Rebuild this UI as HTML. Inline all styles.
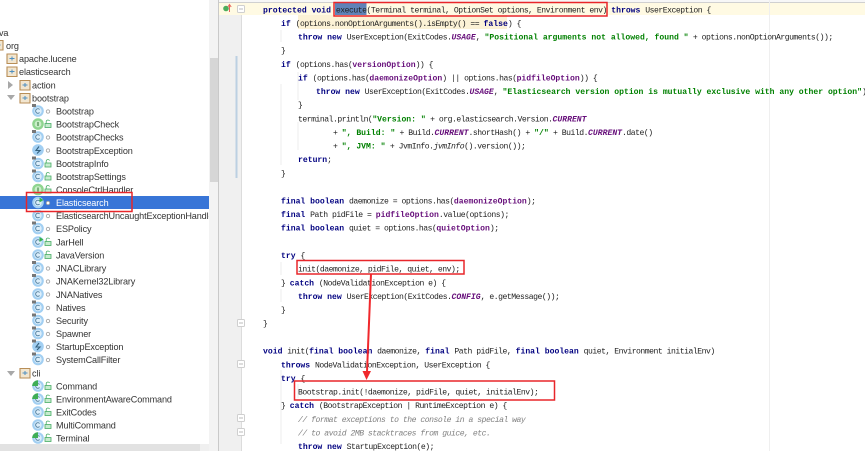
<!DOCTYPE html>
<html><head><meta charset="utf-8">
<style>
html,body{margin:0;padding:0;background:#fff;width:865px;height:451px;overflow:hidden}
svg{display:block}
.c{font:8.11px "Liberation Mono",monospace;fill:#222;white-space:pre;letter-spacing:-.486px}
.k{font-weight:bold;fill:#000080;letter-spacing:0}
.s{font-weight:bold;fill:#008000;letter-spacing:0}
.f{font-weight:bold;fill:#660e7a;letter-spacing:0}
.i{font-weight:bold;font-style:italic;fill:#660e7a;letter-spacing:0}
.m{font-style:italic;fill:#808080}
.t{font:9.1px "Liberation Sans",sans-serif;fill:#333;letter-spacing:-.12px}
.b{filter:blur(.35px)}
</style></head><body>
<svg width="865" height="451" viewBox="0 0 865 451" xmlns="http://www.w3.org/2000/svg">
<defs>
<clipPath id="tc"><rect x="0" y="0" width="209" height="444"/></clipPath>
<g id="cl"><circle r="5.8" fill="#a2cff2"/><circle r="3.7" fill="#dceefa"/><path d="M1.6-1.6A2.3 2.3 0 1 0 1.6 1.6" fill="none" stroke="#4a7a9c" stroke-width=".9"/></g>
<g id="pin"><path d="M-6-7h4v3h-4z" fill="#777"/></g>
<g id="dot"><circle r="1.7" fill="#fff" stroke="#a5a5a5" stroke-width=".9"/></g>
<g id="lock"><rect x="-3" y="-1" width="6" height="4" fill="#c6ebce" stroke="#48ad66" stroke-width=".8"/><path d="M-1.8-1V-3a1.8 1.8 0 0 1 3.4-.5" fill="none" stroke="#48ad66" stroke-width=".8"/></g>
<g id="fo"><path d="M0 .5h10v9.5H0z" fill="#f2e6d0" stroke="#b88e57" stroke-width="1.1"/><path d="M2.5 5h5" stroke="#4f8fc0" stroke-width="1"/><path d="M5 3v4" stroke="#4f8fc0" stroke-width="1"/></g>
<g id="int"><circle r="5.8" fill="#8fd58f"/><circle r="3.4" fill="#c9eec9"/><path d="M0-2V2" stroke="#3c7d3c" stroke-width="1.1"/></g>
<g id="ex"><circle r="5.8" fill="#a2cff2"/><path d="M1-3.500L-2 .5H2L-1 3.500" fill="none" stroke="#35627f" stroke-width="1.1"/></g>
<g id="gr"><path d="M0-5.800A5.800 5.800 0 0 0-5.800 0H0Z" fill="#3fae55"/></g>
<g id="fd"><rect x="-3.500" y="-3.500" width="7" height="7" rx="1" fill="#fff" stroke="#cfcfcf"/><path d="M-2 0H2" stroke="#bbb"/></g>
</defs>

<!-- sidebar chrome -->
<rect x="0" y="196" width="209" height="13" fill="#3875d7"/>
<rect x="209" y="0" width="10" height="451" fill="#f3f3f3"/>
<rect x="210" y="58" width="8" height="124" fill="#d6d6d6"/>
<rect x="0" y="444" width="209" height="7" fill="#f0f0f0"/>
<rect x="0" y="444" width="200" height="7" fill="#e2e2e2"/>

<!-- gutter and editor -->
<rect x="218" y="0" width="1" height="451" fill="#c9c9c9"/>
<rect x="219" y="0" width="22" height="451" fill="#f0f0f0"/>
<rect x="241" y="0" width="1" height="451" fill="#dcdcdc"/>
<rect x="219" y="0" width="646" height="2" fill="#f7f7f7"/>
<rect x="219" y="2" width="646" height="1" fill="#d0d0d0"/>
<rect x="219" y="3" width="646" height="12" fill="#fffae3"/>
<rect x="298" y="15" width="209" height="14" fill="#fcf2d6"/>
<rect x="335" y="3" width="31.500" height="12" fill="#5f82b8"/>
<rect x="769" y="0" width="1" height="451" fill="#efefef"/>
<rect x="235.500" y="56" width="2" height="122" fill="#bcd0e2"/>
<path d="M281 30V42M281 84V165M298 72V100M298 122V150M281 262V275M281 289V302M281 370V444M298 384V398" stroke="#ececec" stroke-width="1"/>

<circle cx="226" cy="8.500" r="2.800" fill="#4cae5c"/>
<path d="M229.500 12V5M227.800 7L229.500 4.500 231.200 7" fill="none" stroke="#e8645c" stroke-width="1"/>
<use href="#fd" x="241" y="9"/><use href="#fd" x="241" y="323"/><use href="#fd" x="241" y="364"/><use href="#fd" x="241" y="418"/><use href="#fd" x="241" y="432"/>

<!-- tree -->
<g clip-path="url(#tc)"><g class="b">
<text class="t" x="-1" y="36">va</text>
<use href="#fo" x="-7" y="40"/><text class="t" x="6" y="49">org</text>
<use href="#fo" x="7" y="53.500"/><text class="t" x="19" y="62">apache.lucene</text>
<use href="#fo" x="7" y="66.500"/><text class="t" x="19" y="75">elasticsearch</text>
<path d="M8 81l5 4-5 4z" fill="#a8a8a8"/><use href="#fo" x="20" y="80"/><text class="t" x="32" y="88.500">action</text>
<path d="M7 95l8 0-4 5z" fill="#a8a8a8"/><use href="#fo" x="20" y="93"/><text class="t" x="32" y="101.500">bootstrap</text>
<use href="#cl" x="38" y="111"/><use href="#pin" x="38" y="111"/><use href="#dot" x="48" y="111.500"/><text class="t" x="56" y="114.500">Bootstrap</text>
<use href="#int" x="38" y="124"/><use href="#lock" x="48" y="124.500"/><text class="t" x="56" y="127.500">BootstrapCheck</text>
<use href="#cl" x="38" y="137"/><use href="#pin" x="38" y="137"/><use href="#dot" x="48" y="137.500"/><text class="t" x="56" y="140.500">BootstrapChecks</text>
<use href="#ex" x="38" y="150"/><use href="#dot" x="48" y="150.500"/><text class="t" x="56" y="154">BootstrapException</text>
<use href="#cl" x="38" y="163.500"/><use href="#pin" x="38" y="163.500"/><use href="#lock" x="48" y="164"/><text class="t" x="56" y="167">BootstrapInfo</text>
<use href="#cl" x="38" y="176.500"/><use href="#pin" x="38" y="176.500"/><use href="#lock" x="48" y="177"/><text class="t" x="56" y="180">BootstrapSettings</text>
<use href="#int" x="38" y="189.500"/><use href="#lock" x="48" y="190"/><text class="t" x="56" y="193">ConsoleCtrlHandler</text>
<use href="#cl" x="38" y="202.500"/><path d="M39.500 197.500l4 2.500-4 2.500z" fill="#37b24d"/><use href="#dot" x="48" y="203"/><text class="t" x="56" y="206" style="fill:#fff">Elasticsearch</text>
<use href="#cl" x="38" y="215.500"/><use href="#dot" x="48" y="216"/><text class="t" x="56" y="219">ElasticsearchUncaughtExceptionHandler</text>
<use href="#cl" x="38" y="228.500"/><use href="#pin" x="38" y="228.500"/><use href="#dot" x="48" y="229"/><text class="t" x="56" y="232">ESPolicy</text>
<use href="#cl" x="38" y="242"/><path d="M39.500 237l4 2.500-4 2.500z" fill="#37b24d"/><use href="#lock" x="48" y="242.500"/><text class="t" x="56" y="245.500">JarHell</text>
<use href="#cl" x="38" y="255"/><use href="#lock" x="48" y="255.500"/><text class="t" x="56" y="258.500">JavaVersion</text>
<use href="#cl" x="38" y="268"/><use href="#pin" x="38" y="268"/><use href="#dot" x="48" y="268.500"/><text class="t" x="56" y="271.500">JNACLibrary</text>
<use href="#cl" x="38" y="281"/><use href="#pin" x="38" y="281"/><use href="#dot" x="48" y="281.500"/><text class="t" x="56" y="284.500">JNAKernel32Library</text>
<use href="#cl" x="38" y="294"/><use href="#dot" x="48" y="294.500"/><text class="t" x="56" y="298">JNANatives</text>
<use href="#cl" x="38" y="307.500"/><use href="#pin" x="38" y="307.500"/><use href="#dot" x="48" y="308"/><text class="t" x="56" y="311">Natives</text>
<use href="#cl" x="38" y="320.500"/><use href="#pin" x="38" y="320.500"/><use href="#dot" x="48" y="321"/><text class="t" x="56" y="324">Security</text>
<use href="#cl" x="38" y="333.500"/><use href="#pin" x="38" y="333.500"/><use href="#dot" x="48" y="334"/><text class="t" x="56" y="337">Spawner</text>
<use href="#ex" x="38" y="346.500"/><use href="#pin" x="38" y="346.500"/><use href="#dot" x="48" y="347"/><text class="t" x="56" y="350">StartupException</text>
<use href="#cl" x="38" y="359.500"/><use href="#pin" x="38" y="359.500"/><use href="#dot" x="48" y="360"/><text class="t" x="56" y="363">SystemCallFilter</text>
<path d="M7 371l8 0-4 5z" fill="#a8a8a8"/><use href="#fo" x="20" y="368"/><text class="t" x="32" y="376.500">cli</text>
<use href="#cl" x="38" y="386"/><use href="#gr" x="38" y="386"/><use href="#lock" x="48" y="386.500"/><text class="t" x="56" y="389.500">Command</text>
<use href="#cl" x="38" y="399"/><use href="#gr" x="38" y="399"/><use href="#lock" x="48" y="399.500"/><text class="t" x="56" y="402.500">EnvironmentAwareCommand</text>
<use href="#cl" x="38" y="412"/><use href="#lock" x="48" y="412.500"/><text class="t" x="56" y="415.500">ExitCodes</text>
<use href="#cl" x="38" y="425"/><use href="#lock" x="48" y="425.500"/><text class="t" x="56" y="428.500">MultiCommand</text>
<use href="#cl" x="38" y="438"/><use href="#gr" x="38" y="438"/><use href="#lock" x="48" y="438.500"/><text class="t" x="56" y="441.500">Terminal</text>
</g></g>

<!-- code -->
<g class="b">
<text class="c" x="263" y="12.500"><tspan class="k">protected void </tspan>execute(Terminal terminal, OptionSet options, Environment env) <tspan class="k">throws </tspan>UserException {</text>
<text class="c" x="281" y="26"><tspan class="k">if </tspan>(options.nonOptionArguments().isEmpty() == <tspan class="k">false</tspan>) {</text>
<text class="c" x="298" y="39.500"><tspan class="k">throw new </tspan>UserException(ExitCodes.<tspan class="i">USAGE</tspan>, <tspan class="s">"Positional arguments not allowed, found "</tspan> + options.nonOptionArguments());</text>
<text class="c" x="281" y="53">}</text>
<text class="c" x="281" y="67"><tspan class="k">if </tspan>(options.has(<tspan class="f">versionOption</tspan>)) {</text>
<text class="c" x="298" y="80.500"><tspan class="k">if </tspan>(options.has(<tspan class="f">daemonizeOption</tspan>) || options.has(<tspan class="f">pidfileOption</tspan>)) {</text>
<text class="c" x="316" y="94"><tspan class="k">throw new </tspan>UserException(ExitCodes.<tspan class="i">USAGE</tspan>, <tspan class="s">"Elasticsearch version option is mutually exclusive with any other option"</tspan>);</text>
<text class="c" x="298" y="107.500">}</text>
<text class="c" x="298" y="121.500">terminal.println(<tspan class="s">"Version: "</tspan> + org.elasticsearch.Version.<tspan class="i">CURRENT</tspan></text>
<text class="c" x="333" y="135">+ <tspan class="s">", Build: "</tspan> + Build.<tspan class="i">CURRENT</tspan>.shortHash() + <tspan class="s">"/"</tspan> + Build.<tspan class="i">CURRENT</tspan>.date()</text>
<text class="c" x="333" y="148.500">+ <tspan class="s">", JVM: "</tspan> + JvmInfo.<tspan style="font-style:italic">jvmInfo</tspan>().version());</text>
<text class="c" x="298" y="162"><tspan class="k">return</tspan>;</text>
<text class="c" x="281" y="176">}</text>
<text class="c" x="281" y="203.500"><tspan class="k">final boolean </tspan>daemonize = options.has(<tspan class="f">daemonizeOption</tspan>);</text>
<text class="c" x="281" y="217"><tspan class="k">final </tspan>Path pidFile = <tspan class="f">pidfileOption</tspan>.value(options);</text>
<text class="c" x="281" y="230.500"><tspan class="k">final boolean </tspan>quiet = options.has(<tspan class="f">quietOption</tspan>);</text>
<text class="c" x="281" y="258"><tspan class="k">try </tspan>{</text>
<text class="c" x="298" y="271.500">init(daemonize, pidFile, quiet, env);</text>
<text class="c" x="281" y="285.500">} <tspan class="k">catch </tspan>(NodeValidationException e) {</text>
<text class="c" x="298" y="299"><tspan class="k">throw new </tspan>UserException(ExitCodes.<tspan class="i">CONFIG</tspan>, e.getMessage());</text>
<text class="c" x="281" y="312.500">}</text>
<text class="c" x="263" y="326">}</text>
<text class="c" x="263" y="353.500"><tspan class="k">void </tspan>init(<tspan class="k">final boolean </tspan>daemonize, <tspan class="k">final </tspan>Path pidFile, <tspan class="k">final boolean </tspan>quiet, Environment initialEnv)</text>
<text class="c" x="281" y="367.500"><tspan class="k">throws </tspan>NodeValidationException, UserException {</text>
<text class="c" x="281" y="381"><tspan class="k">try </tspan>{</text>
<text class="c" x="298" y="394.500">Bootstrap.init(!daemonize, pidFile, quiet, initialEnv);</text>
<text class="c" x="281" y="408">} <tspan class="k">catch </tspan>(BootstrapException | RuntimeException e) {</text>
<text class="c m" x="298" y="422">// format exceptions to the console in a special way</text>
<text class="c m" x="298" y="435.500">// to avoid 2MB stacktraces from guice, etc.</text>
<text class="c" x="298" y="449"><tspan class="k">throw new </tspan>StartupException(e);</text>
</g>

<!-- annotations -->
<g fill="none" stroke="#e8262a" stroke-width="1.500">
<rect x="26.500" y="192.500" width="105.500" height="19"/>
<rect x="334" y="2.500" width="273" height="13.500"/>
<rect x="297" y="260.500" width="167" height="13.500"/>
<rect x="294.500" y="381" width="260" height="19"/>
</g>
<path d="M371 274L367 372" stroke="#f0282c" stroke-width="2" fill="none"/>
<path d="M362.500 371L371 371 366.500 380Z" fill="#f0282c"/>
</svg>
</body></html>
